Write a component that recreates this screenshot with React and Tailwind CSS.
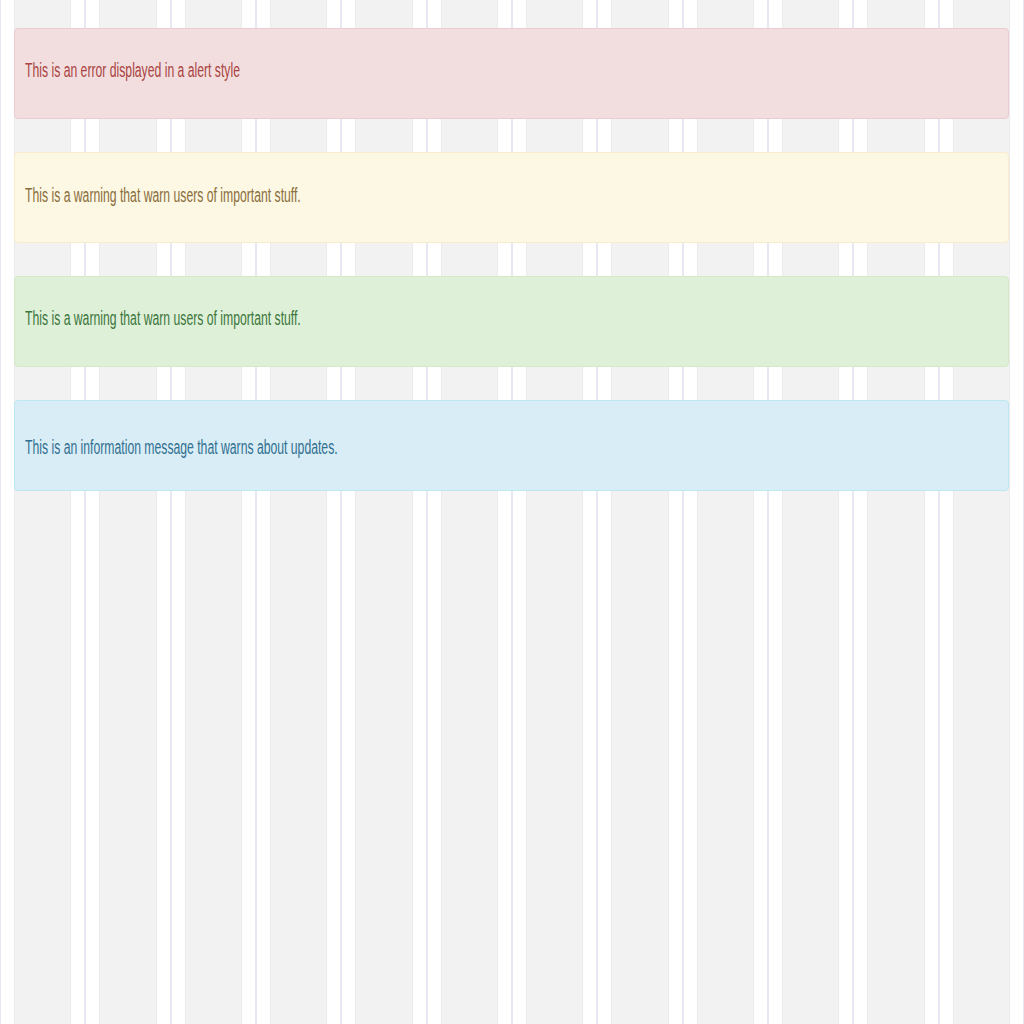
import React from "react";

const alerts = [
  { text: "This is an error displayed in a alert style", cls: "bg-[#f2dede] border-[#ebccd1] text-[#a94442]", t: "-mt-[7px]" },
  { text: "This is a warning that warn users of important stuff.", cls: "bg-[#fcf8e3] border-[#faebcc] text-[#8a6d3b]", t: "-mt-[6px]" },
  { text: "This is a warning that warn users of important stuff.", cls: "bg-[#dff0d8] border-[#d6e9c6] text-[#3c763d]", t: "-mt-[7px]" },
  { text: "This is an information message that warns about updates.", cls: "bg-[#d9edf7] border-[#bce8f1] text-[#31708f]", t: "mt-[2px]" },
];

export default function App() {
  return (
    <div className="relative h-[1024px] w-full overflow-hidden bg-white" style={{ fontFamily: '"Liberation Sans", Arial, sans-serif' }}>
      <div className="absolute inset-0 flex">
        {Array.from({ length: 12 }).map((_, i) => (
          <div key={i} className="flex-1 border-x border-[#e8e8f2] px-[13px]">
            <div className="h-full bg-[#f2f2f2] border-x border-[#eaeaef]" />
          </div>
        ))}
      </div>
      <div className="relative flex flex-col gap-[33px] pl-[14px] pr-[15px] pt-[28px]">
        {alerts.map((a, i) => (
          <div key={i} className={`flex h-[91px] items-center rounded-[4px] border pl-[10px] ${a.cls}`}>
            <span className={`inline-block origin-left scale-x-[0.61] whitespace-nowrap text-[20px] leading-none ${a.t}`}>
              {a.text}
            </span>
          </div>
        ))}
      </div>
    </div>
  );
}
